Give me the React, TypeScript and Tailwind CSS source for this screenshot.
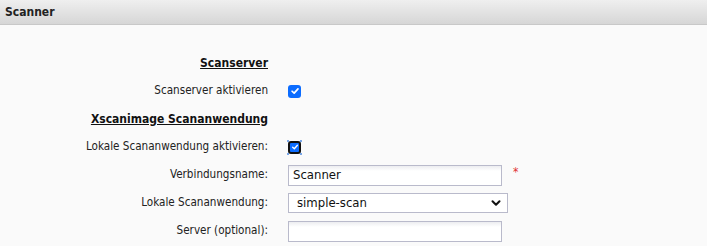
import { ChevronDown } from "lucide-react";

const font = "font-['Tahoma','DejaVu_Sans_Condensed','DejaVu_Sans',sans-serif]";

const Row = ({ label, children, heading }: { label: string; children?: React.ReactNode; heading?: boolean }) => (
    <div className="flex items-center h-[28px]">
        <div className={`w-[268px] text-right ${heading ? "font-bold underline text-[12px] text-[#111]" : "text-[11.6px] text-[#222]"}`}>
            {label}
        </div>
        <div className="ml-[20px] flex items-center">{children}</div>
    </div>
);

const Check = ({ focused }: { focused?: boolean }) => (
    <span className={`relative flex items-center justify-center w-[13px] h-[13px] rounded-[3px] bg-[#0b6cff] ${focused ? "border-2 border-[#111]" : ""}`}>
        <svg viewBox="0 0 12 12" className={focused ? "w-[8px] h-[8px]" : "w-[10px] h-[10px]"}>
            <path d="M2.5 6.3 L5 8.6 L9.6 3.4" fill="none" stroke="white" strokeWidth="2" strokeLinecap="round" strokeLinejoin="round" />
        </svg>
        {focused && (
            <>
                <span className="absolute -top-[3px] -left-[3px] w-[2px] h-[2px] bg-[#7aa7e8]" />
                <span className="absolute -top-[3px] -right-[3px] w-[2px] h-[2px] bg-[#7aa7e8]" />
                <span className="absolute -bottom-[3px] -left-[3px] w-[2px] h-[2px] bg-[#7aa7e8]" />
                <span className="absolute -bottom-[3px] -right-[3px] w-[2px] h-[2px] bg-[#7aa7e8]" />
            </>
        )}
    </span>
);

const TextInput = ({ value }: { value?: string }) => (
    <div className="w-[214px] h-[21px] border border-[#b9bacb] bg-[linear-gradient(#ecedf0,#ffffff_5px)] flex items-center px-[4px] text-[13px] text-[#111]">
        {value}
    </div>
);

export default function App() {
    return (
        <div className={`w-[707px] h-[246px] bg-[#fafafa] ${font}`}>
            <div className="h-[25px] border-b border-[#c8c8c8] bg-[linear-gradient(#efefef,#d6d6d6)] flex items-center px-[5px] text-[12px] font-bold text-[#222]">
                Scanner
            </div>
            <div className="pt-[24px]">
                <Row label="Scanserver" heading />
                <Row label="Scanserver aktivieren">
                    <Check />
                </Row>
                <Row label="Xscanimage Scananwendung" heading />
                <Row label="Lokale Scananwendung aktivieren:">
                    <Check focused />
                </Row>
                <Row label="Verbindungsname:">
                    <TextInput value="Scanner" />
                    <span className="ml-[11px] text-[#e03030] text-[12px] -mt-[6px]">*</span>
                </Row>
                <Row label="Lokale Scananwendung:">
                    <div className="w-[220px] h-[20px] border border-[#b9bacb] bg-white flex items-center justify-between pl-[8px] pr-[4px] text-[13px] text-[#111]">
                        simple-scan
                        <ChevronDown className="w-[14px] h-[14px]" strokeWidth={3.5} />
                    </div>
                </Row>
                <Row label="Server (optional):">
                    <TextInput />
                </Row>
            </div>
        </div>
    );
}
